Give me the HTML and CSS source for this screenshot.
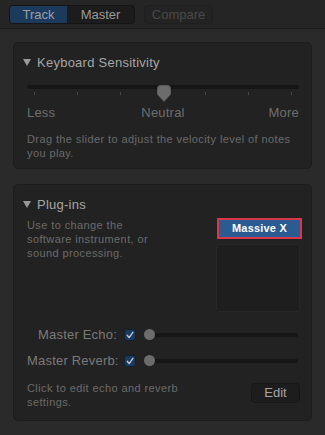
FILE: index.html
```html
<!DOCTYPE html>
<html>
<head>
<meta charset="utf-8">
<link rel="stylesheet" href="styles.css">
</head>
<body>
<header class="topbar">
  <div class="seg">
    <span class="seg-item active">Track</span>
    <span class="seg-item">Master</span>
  </div>
  <span class="btn-disabled">Compare</span>
</header>
<main class="content">
  <section class="panel">
    <div class="panel-title">
      <svg class="disclosure" width="8" height="7" viewBox="0 0 8 7"><path d="M0 0 H8 L4 7 Z" fill="#9a9a9a"/></svg>
      <span>Keyboard Sensitivity</span>
    </div>
    <div class="slider">
      <div class="track"></div>
      <div class="ticks"><i></i><i></i><i></i><i></i><i></i><i></i><i></i></div>
      <svg class="thumb" width="14" height="17" viewBox="0 0 14 17"><path d="M0.5 3.5 Q0.5 0.5 3.5 0.5 H10.5 Q13.5 0.5 13.5 3.5 V9.5 L7 16.5 L0.5 9.5 Z" fill="#6c6c6c" stroke="#5a5a5a" stroke-width="1"/></svg>
    </div>
    <div class="slider-labels"><span>Less</span><span>Neutral</span><span class="right">More</span></div>
    <p class="desc desc-ks">Drag the slider to adjust the velocity level of notes you play.</p>
  </section>

  <section class="panel panel-plug">
    <div class="panel-title">
      <svg class="disclosure" width="8" height="7" viewBox="0 0 8 7"><path d="M0 0 H8 L4 7 Z" fill="#9a9a9a"/></svg>
      <span>Plug-ins</span>
    </div>
    <div class="plug-row">
      <p class="desc">Use to change the<br>software instrument, or<br>sound processing.</p>
      <div class="plug-col">
        <button class="plugin-btn">Massive X</button>
        <div class="plugin-box"></div>
      </div>
    </div>
    <div class="sends">
      <span class="send-label">Master Echo:</span>
      <span class="check"><svg width="10" height="10" viewBox="0 0 10 10"><path d="M2.2 5.2 L4.2 7.6 L8 2.2" fill="none" stroke="#b9c6d4" stroke-width="1.4" stroke-linecap="round" stroke-linejoin="round"/></svg></span>
      <div class="mini-slider"><span class="mini-thumb"></span></div>
      <span class="send-label">Master Reverb:</span>
      <span class="check"><svg width="10" height="10" viewBox="0 0 10 10"><path d="M2.2 5.2 L4.2 7.6 L8 2.2" fill="none" stroke="#b9c6d4" stroke-width="1.4" stroke-linecap="round" stroke-linejoin="round"/></svg></span>
      <div class="mini-slider"><span class="mini-thumb"></span></div>
    </div>
    <div class="edit-row">
      <p class="desc">Click to edit echo and reverb<br>settings.</p>
      <button class="edit-btn">Edit</button>
    </div>
  </section>
</main>
</body>
</html>
```

FILE: styles.css
```css
* { box-sizing: border-box; }
html, body { margin: 0; padding: 0; }
body {
  width: 325px;
  height: 435px;
  background: #2a2a2a;
  font-family: "Liberation Sans", Arial, sans-serif;
  overflow: hidden;
}
.topbar {
  height: 29px;
  background: #252525;
  border-bottom: 1px solid #1a1a1a;
  display: flex;
  align-items: flex-start;
  padding: 5px 0 0 9px;
  gap: 9px;
}
.seg {
  display: flex;
  height: 19px;
  border-radius: 4px;
  overflow: hidden;
  border: 1px solid #151515;
  background: #1c1c1c;
}
.seg-item {
  font-size: 13px;
  line-height: 17px;
  color: #9a9a9a;
  text-align: center;
}
.seg-item:first-child { width: 57px; }
.seg-item:last-child { width: 67px; }
.seg-item.active { background: #1c3a5c; color: #9aa0a8; }
.btn-disabled {
  width: 69px;
  height: 19px;
  border-radius: 4px;
  background: #232323;
  border: 1px solid #1f1f1f;
  color: #4a4a4a;
  font-size: 13px;
  line-height: 17px;
  text-align: center;
}
.content {
  padding: 13px 13px 0 13px;
  display: flex;
  flex-direction: column;
  gap: 15px;
}
.panel {
  background: #222222;
  border: 1px solid #1c1c1c;
  border-radius: 5px;
  padding: 11px 11px 8px 13px;
}
.panel-plug { padding-bottom: 11px; }
.panel-title {
  display: flex;
  align-items: center;
  gap: 6px;
  margin-left: -4px;
  height: 16px;
  font-size: 13px;
  letter-spacing: 0.25px;
  color: #a6a6a6;
}
.disclosure { flex: none; margin-top: 1px; }
.slider {
  position: relative;
  height: 17px;
  margin: 15px 1px 0 0;
}
.track {
  margin-top: 7px;
  height: 4px;
  border-radius: 2px;
  background: #161616;
}
.ticks {
  display: flex;
  justify-content: space-between;
  margin: 3px 7px 0 7px;
}
.ticks i {
  display: block;
  width: 1px;
  height: 3px;
  background: #474747;
}
.thumb {
  position: absolute;
  left: 130px;
  top: 0;
}
.slider-labels {
  display: grid;
  grid-template-columns: 1fr auto 1fr;
  margin: 3px 1px 0 0;
  font-size: 13px;
  line-height: 15px;
  letter-spacing: 0.2px;
  color: #6e6e6e;
}
.slider-labels .right { text-align: right; }
.desc {
  margin: 0;
  font-size: 11px;
  line-height: 14px;
  letter-spacing: 0.4px;
  color: #6b6b6b;
}
.desc-ks { margin-top: 12px; padding-right: 8px; }
.plug-row {
  display: flex;
  justify-content: space-between;
  margin-top: 6px;
}
.plug-col {
  width: 86px;
  margin-right: -2px;
  display: flex;
  flex-direction: column;
  align-items: flex-start;
}
.plugin-btn {
  align-self: flex-end;
  width: 85px;
  height: 21px;
  padding: 0;
  border: 2px solid #d9364b;
  background: #2a5b92;
  color: #ffffff;
  font-family: "Liberation Sans", Arial, sans-serif;
  font-size: 11px;
  font-weight: bold;
  letter-spacing: 0.2px;
  line-height: 17px;
}
.plugin-box {
  width: 84px;
  height: 68px;
  margin-top: 5px;
  background: #1e1e1e;
  border: 1px solid #272727;
  border-radius: 3px;
}
.sends {
  display: grid;
  grid-template-columns: 90px 12px 1fr;
  column-gap: 7px;
  row-gap: 6px;
  align-items: center;
  margin-top: 13px;
}
.send-label {
  text-align: right;
  font-size: 13px;
  line-height: 20px;
  letter-spacing: 0.2px;
  color: #7a7a7a;
  white-space: nowrap;
}
.check {
  width: 12px;
  height: 12px;
  border-radius: 3px;
  background: #1c3a5c;
  border: 1px solid #112033;
  display: flex;
  align-items: center;
  justify-content: center;
}
.mini-slider {
  position: relative;
  height: 4px;
  margin: 0 2px 0 1px;
  border-radius: 2px;
  background: #161616;
}
.mini-thumb {
  position: absolute;
  left: 0;
  top: -4px;
  width: 11px;
  height: 11px;
  border-radius: 50%;
  background: #6c6c6c;
}
.edit-row {
  display: flex;
  justify-content: space-between;
  align-items: flex-start;
  margin-top: 10px;
}
.edit-btn {
  margin-top: 2px;
  width: 49px;
  height: 20px;
  padding: 0;
  border-radius: 4px;
  background: #1d1d1d;
  border: 1px solid #171717;
  color: #a5a5a5;
  font-family: "Liberation Sans", Arial, sans-serif;
  font-size: 13px;
  line-height: 18px;
}
```
